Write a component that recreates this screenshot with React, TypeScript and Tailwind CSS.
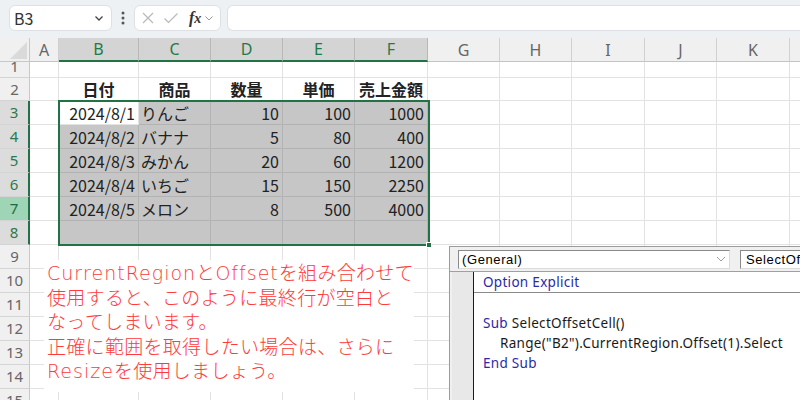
import React from "react";

const JP = "font-['Noto_Sans_CJK_JP','Noto_Sans',sans-serif]";

type Col = { k: string; w: string; label: string };
const cols: Col[] = [
  { k: "A", w: "w-[29px]", label: "A" },
  { k: "B", w: "w-[80px]", label: "B" },
  { k: "C", w: "w-[72px]", label: "C" },
  { k: "D", w: "w-[72px]", label: "D" },
  { k: "E", w: "w-[72px]", label: "E" },
  { k: "F", w: "w-[73px]", label: "F" },
  { k: "G", w: "w-[72px]", label: "G" },
  { k: "H", w: "w-[72px]", label: "H" },
  { k: "I", w: "w-[73px]", label: "I" },
  { k: "J", w: "w-[72px]", label: "J" },
  { k: "K", w: "w-[73px]", label: "K" },
  { k: "L", w: "w-[60px]", label: "" },
];

const selCols = ["B", "C", "D", "E", "F"];

type CellVal = { t: string; align: "l" | "r" | "c"; bold?: boolean };
const data: Record<number, Record<string, CellVal>> = {
  2: {
    B: { t: "日付", align: "c", bold: true },
    C: { t: "商品", align: "c", bold: true },
    D: { t: "数量", align: "c", bold: true },
    E: { t: "単価", align: "c", bold: true },
    F: { t: "売上金額", align: "c", bold: true },
  },
  3: { B: { t: "2024/8/1", align: "r" }, C: { t: "りんご", align: "l" }, D: { t: "10", align: "r" }, E: { t: "100", align: "r" }, F: { t: "1000", align: "r" } },
  4: { B: { t: "2024/8/2", align: "r" }, C: { t: "バナナ", align: "l" }, D: { t: "5", align: "r" }, E: { t: "80", align: "r" }, F: { t: "400", align: "r" } },
  5: { B: { t: "2024/8/3", align: "r" }, C: { t: "みかん", align: "l" }, D: { t: "20", align: "r" }, E: { t: "60", align: "r" }, F: { t: "1200", align: "r" } },
  6: { B: { t: "2024/8/4", align: "r" }, C: { t: "いちご", align: "l" }, D: { t: "15", align: "r" }, E: { t: "150", align: "r" }, F: { t: "2250", align: "r" } },
  7: { B: { t: "2024/8/5", align: "r" }, C: { t: "メロン", align: "l" }, D: { t: "8", align: "r" }, E: { t: "500", align: "r" }, F: { t: "4000", align: "r" } },
};

const rows = [1, 2, 3, 4, 5, 6, 7, 8, 9, 10, 11, 12, 13, 14, 15];

function rowH(r: number) {
  if (r === 1) return "h-[16px]";
  if (r === 2) return "h-[23px]";
  return "h-[24px]";
}

function TopBar() {
  return (
    <div className="h-[38px] bg-[#eef1f4] flex items-start pt-[5px] pl-[9px] gap-0">
      <div className="w-[103px] shrink-0 h-[26px] bg-white border border-[#dde1e5] rounded-[6px] flex items-center justify-between pl-[4px] pr-[6px]">
        <span className={`${JP} text-[16px] text-[#333]`}>B3</span>
        <svg width="12" height="12" viewBox="0 0 12 12">
          <path d="M2.5 4.5 L6 8 L9.5 4.5" stroke="#444" strokeWidth="1.3" fill="none" />
        </svg>
      </div>
      <div className="w-[22px] shrink-0 h-[26px] flex items-center justify-center">
        <svg width="4" height="14" viewBox="0 0 4 14">
          <circle cx="2" cy="2" r="1.5" fill="#555" />
          <circle cx="2" cy="7" r="1.5" fill="#555" />
          <circle cx="2" cy="12" r="1.5" fill="#555" />
        </svg>
      </div>
      <div className="w-[87px] shrink-0 h-[26px] bg-white border border-[#dde1e5] rounded-[6px] flex items-center">
        <svg width="14" height="14" viewBox="0 0 14 14" className="ml-[6px]">
          <path d="M2 2 L12 12 M12 2 L2 12" stroke="#b8b8b8" strokeWidth="1.2" />
        </svg>
        <svg width="16" height="14" viewBox="0 0 16 14" className="ml-[8px]">
          <path d="M1.5 7.5 L5.5 11.5 L14.5 2.5" stroke="#b8b8b8" strokeWidth="1.2" fill="none" />
        </svg>
        <span className="ml-[10px] text-[16px] italic font-['Liberation_Serif',serif] text-[#333] font-bold leading-none">
          f<span className="text-[14px]">x</span>
        </span>
        <svg width="10" height="10" viewBox="0 0 10 10" className="ml-[3px]">
          <path d="M1.5 3.5 L5 7 L8.5 3.5" stroke="#999" strokeWidth="1" fill="none" />
        </svg>
      </div>
      <div className="ml-[6px] flex-1 h-[26px] bg-white border border-[#dde1e5] rounded-l-[6px] border-r-0" />
    </div>
  );
}

function HeaderRow() {
  return (
    <div className="flex h-[24px]">
      <div className="w-[30px] shrink-0 h-full bg-[#f0f0f0] border-r border-b border-[#c8c8c8] relative">
        <svg width="30" height="24" viewBox="0 0 30 24" className="absolute left-0 top-0">
          <polygon points="10,21 27,21 27,4" fill="#dadada" />
        </svg>
      </div>
      {cols.map((c) => {
        const sel = selCols.includes(c.k);
        return (
          <div
            key={c.k}
            className={`${c.w} shrink-0 h-full flex items-center justify-center text-[16px] font-['Noto_Sans',sans-serif] border-r ${
              sel
                ? "bg-[#d4d4d4] text-[#1f7a49] border-[#b8b8b8] border-b-2 border-b-[#217346]"
                : "bg-[#f0f0f0] text-[#666] border-[#d0d0d0] border-b border-b-[#c4c4c4]"
            }`}
          >
            <span className="leading-none">{c.label}</span>
          </div>
        );
      })}
    </div>
  );
}

function RowHeader({ r }: { r: number }) {
  const sel = r >= 3 && r <= 8;
  let cls = "bg-[#f0f0f0] text-[#666] border-r border-[#c8c8c8]";
  if (sel) cls = "bg-[#dcdcdc] text-[#2a7a4d] border-r-2 border-r-[#217346]";
  if (r === 7) cls = "bg-[#9fd5b7] text-[#1e6a41] border-r-2 border-r-[#217346]";
  return (
    <div className={`w-[30px] shrink-0 h-full border-b border-b-[#d4d4d4] ${cls} overflow-hidden relative`}>
      {r === 1 ? (
        <div className="absolute left-0 right-0 top-[-8px] h-[24px] flex items-center justify-center text-[15px] font-['Noto_Sans',sans-serif]">
          1
        </div>
      ) : (
        <div className="h-full flex items-center justify-center text-[15px] font-['Noto_Sans',sans-serif]">{r}</div>
      )}
    </div>
  );
}

function GridRow({ r }: { r: number }) {
  return (
    <div className={`flex ${rowH(r)}`}>
      <RowHeader r={r} />
      {cols.map((c) => {
        const sel = r >= 3 && r <= 8 && selCols.includes(c.k);
        const active = r === 3 && c.k === "B";
        const v = data[r]?.[c.k];
        const bg = active ? "bg-white border-[#e2e2e2]" : sel ? "bg-[#c6c6c6] border-[#b3b3b3]" : "bg-white border-[#e2e2e2]";
        const just = v ? (v.align === "r" ? "justify-end pr-[3px]" : v.align === "l" ? "justify-start pl-[2px]" : "justify-center") : "";
        return (
          <div key={c.k} className={`${c.w} shrink-0 h-full border-r border-b ${bg} flex items-center ${just} overflow-visible whitespace-nowrap`}>
            {v && (
              <span className={`${JP} text-[16px] leading-none text-[#222] ${v.bold ? "font-bold" : ""}`}>{v.t}</span>
            )}
          </div>
        );
      })}
    </div>
  );
}

function VbaWindow() {
  return (
    <div className="absolute left-[449px] top-[246px] w-[360px] h-[160px] border-l border-t border-[#9c9c9c] bg-[#f0f0f0] flex flex-col">
      <div className="h-[25px] shrink-0 flex items-center pl-[8px] gap-[10px] border-b border-[#a0a0a0]">
        <div className="w-[272px] shrink-0 h-[19px] bg-white border border-[#8a8a8a] border-r-[#dcdcdc] border-b-[#dcdcdc] flex items-center justify-between pl-[3px] pr-[2px]">
          <span className="font-['Liberation_Sans',sans-serif] text-[13px] tracking-[0.6px] text-black leading-none">(General)</span>
          <svg width="12" height="10" viewBox="0 0 12 10">
            <path d="M2 3 L6 7 L10 3" stroke="#a0a0a0" strokeWidth="1" fill="none" />
          </svg>
        </div>
        <div className="w-[80px] shrink-0 h-[19px] bg-white border border-[#8a8a8a] border-r-0 border-b-[#dcdcdc] flex items-center pl-[5px] overflow-hidden whitespace-nowrap">
          <span className="font-['Liberation_Sans',sans-serif] text-[13px] tracking-[0.6px] text-black leading-none">SelectOffsetCell</span>
        </div>
      </div>
      <div className="flex-1 flex">
        <div className="w-[2px] bg-[#f0f0f0]" />
        <div className="w-[22px] bg-[#e8e8e8] border-r border-[#1a1a1a]" />
        <div className="flex-1 bg-white font-['Noto_Sans',sans-serif] text-[13.5px] tracking-[0.3px] text-[#1a1a1a]">
          <div className="h-[21px] border-b border-[#8a8a8a] flex items-center pl-[9px] text-[#2a2aa8]">Option Explicit</div>
          <div className="h-[20px]" />
          <div className="h-[20px] flex items-center pl-[9px] whitespace-pre">
            <span className="text-[#2a2aa8]">Sub</span> SelectOffsetCell()
          </div>
          <div className="h-[20px] flex items-center pl-[26px] whitespace-pre">Range("B2").CurrentRegion.Offset(1).Select</div>
          <div className="h-[20px] flex items-center pl-[9px] text-[#2a2aa8]">End Sub</div>
        </div>
      </div>
    </div>
  );
}

function Latin({ children }: { children: React.ReactNode }) {
  return <span className="tracking-[1px]">{children}</span>;
}

export default function App() {
  const lines: React.ReactNode[] = [
    <>
      <Latin>CurrentRegion</Latin>と<Latin>Offset</Latin>を組み合わせて
    </>,
    <>使用すると、このように最終行が空白と</>,
    <>なってしまいます。</>,
    <>正確に範囲を取得したい場合は、さらに</>,
    <>
      <Latin>Resize</Latin>を使用しましょう。
    </>,
  ];
  return (
    <div className="w-[800px] h-[400px] overflow-hidden relative bg-white">
      <TopBar />
      <HeaderRow />
      {rows.map((r) => (
        <GridRow key={r} r={r} />
      ))}
      <div className="absolute left-[58px] top-[100px] w-[372px] h-[146px] border-2 border-[#217346] pointer-events-none" />
      <div className="absolute left-[426px] top-[242px] w-[6px] h-[6px] bg-[#217346] border border-white" />
      <div className="absolute left-[44px] top-[260px] w-[370px] h-[132px] bg-white pl-[3px] pt-[1px]">
        {lines.map((l, i) => (
          <div
            key={i}
            className="h-[24.5px] leading-[24.5px] whitespace-nowrap text-[19px] font-light tracking-[0.3px] text-[#ff3a3a] font-['DejaVu_Sans','Noto_Sans_CJK_JP',sans-serif]"
          >
            {l}
          </div>
        ))}
      </div>
      <VbaWindow />
    </div>
  );
}
